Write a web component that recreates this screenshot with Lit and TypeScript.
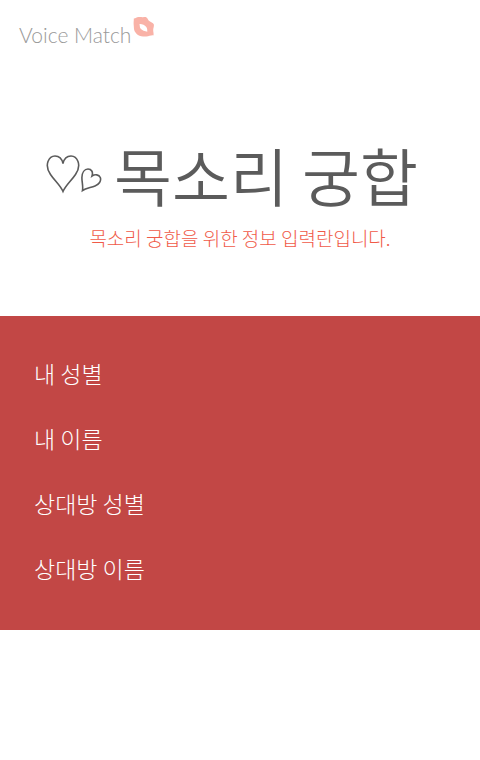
import { LitElement, html, css } from "lit";
import { customElement } from "lit/decorators.js";

@customElement("app-root")
export class AppRoot extends LitElement {
  static styles = css`
    :host {
      display: block;
      min-height: 100vh;
      background: #fff;
      font-family: "Noto Sans CJK KR", sans-serif;
      font-weight: 300;
    }
    .brand {
      display: flex;
      align-items: flex-start;
      gap: 2px;
      padding: 16px 19px 0;
    }
    .name {
      padding-top: 5px;
      font: 300 21px/28px Lato, sans-serif;
      color: #999;
      white-space: nowrap;
    }
    .lips {
      width: 22px;
      height: 22px;
    }
    .intro {
      padding: 83px 0 64px;
      text-align: center;
    }
    .title {
      display: flex;
      justify-content: center;
      align-items: center;
      gap: 12px;
      margin: 0 16px 0 0;
      font-size: 63px;
      line-height: 84px;
      font-weight: 350;
      color: #5b5b5b;
      white-space: nowrap;
    }
    .hearts {
      width: 56px;
      height: 40px;
      flex: none;
    }
    .lead {
      margin: 8px 0 0;
      font-size: 19px;
      line-height: 28px;
      color: #f05a48;
    }
    .fields {
      margin: 0;
      padding: 25px 34px 29px;
      list-style: none;
      background: #c24745;
      color: #fff;
      font-size: 23px;
      line-height: 65px;
    }
  `;

  private readonly fields = ["내 성별", "내 이름", "상대방 성별", "상대방 이름"];

  render() {
    return html`
      <header class="brand">
        <span class="name">Voice Match</span>
        <svg class="lips" viewBox="0 0 22 22" aria-hidden="true">
          <path
            fill="#f9b2a7"
            fill-rule="evenodd"
            d="M.8 2.500C2.500 2.600 3.500 1.300 5.500 1.100C7.500 .9 8.500 1.300 10 1.200C11.500 1.100 12.500 .8 13.500 1.500C14.800 2.600 15 4 16.200 5C17.800 6.200 20 6.800 20.800 8.200C21.300 10.500 20.200 12 20.200 14C20.200 16 20.900 17.500 20.500 19.400C18 19 16 20.500 13 20.400C10.500 20.300 8.500 20.700 6.500 19.800C4.300 18.800 3 17.300 1.800 15.500C.7 13.500 1 11.500 .7 9C.4 6.500 .9 4.500 .8 2.500ZM6.500 8C6.900 9.500 6.600 11 7.500 12.500C9 14.800 12 14.800 14.300 15.800C14.200 14.200 14.500 12.500 13.300 10.900C11.700 8.900 9 7.800 6.500 8Z"
          />
        </svg>
      </header>
      <main>
        <section class="intro">
          <h1 class="title">
            <svg
              class="hearts"
              viewBox="0 0 56 40"
              fill="none"
              stroke="#5b5b5b"
              stroke-width="1.6"
              aria-hidden="true"
            >
              <path
                d="M17 37.500C14.500 31.500 8.500 26.500 4.500 20.500C1.500 16 .5 11.500 2 7.500C3.300 4 6 2 9 2C13 2 16 5 17 9.500C18 5 21 2 25 2C28 2 30.700 4 32 7.500C33.500 11.500 32.500 16 29.500 20.500C25.500 26.500 19.500 31.500 17 37.500Z"
              />
              <path
                d="M36.500 36.500C37.300 32 35.800 28 35.900 23.500C36 18.500 38.500 15 42 15C45.500 15 47.300 18 46 22C49 20 53 20.500 54.300 23.500C55.500 27 53 30.500 49 32C45 33.700 40 34 36.500 36.500Z"
              />
            </svg>
            <span>목소리 궁합</span>
          </h1>
          <p class="lead">목소리 궁합을 위한 정보 입력란입니다.</p>
        </section>
        <ul class="fields">
          ${this.fields.map((field) => html`<li>${field}</li>`)}
        </ul>
      </main>
    `;
  }
}
